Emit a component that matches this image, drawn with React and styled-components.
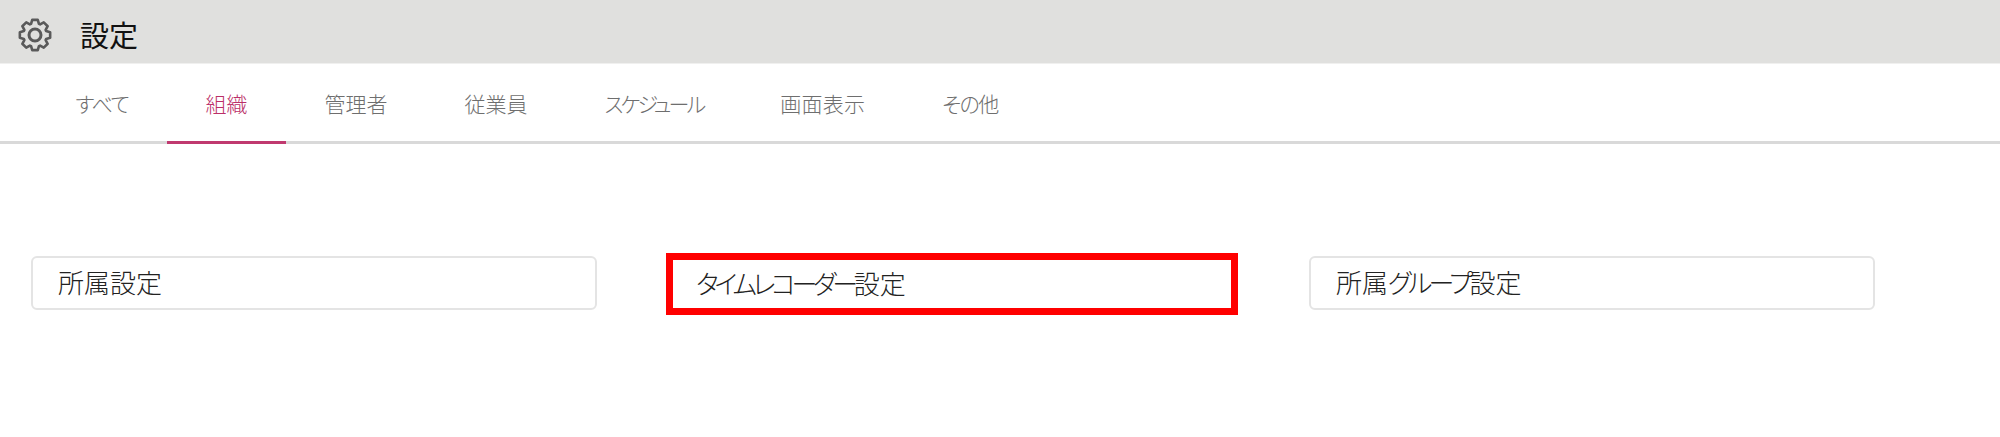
import React from "react"
import styled, { createGlobalStyle } from "styled-components"

const GlobalStyle = createGlobalStyle`
  body {
    margin: 0;
    background: white;
    font-family: "Noto Sans CJK JP", "Noto Sans", sans-serif;
    font-feature-settings: "palt";
  }
`

const Page = styled.div`
  min-height: 437px;
`

const Header = styled.header`
  display: flex;
  align-items: center;
  height: 57px;
  padding: 6px 0 0 18px;
  background-color: #e0e0de;
  border-bottom: 1px solid #f0f0ef;
`

const GearSvg = styled.svg`
  width: 34px;
  height: 34px;
  flex-shrink: 0;
  fill: none;
  stroke: #5a5a5a;
`

const Title = styled.h1`
  margin: 0 0 0 28px;
  font-size: 29px;
  font-weight: 400;
  line-height: 1;
  color: #111111;
`

const TabBar = styled.nav`
  display: flex;
  height: 77px;
  padding-left: 37px;
  border-bottom: 3px solid #d9d9d9;
`

const Tab = styled.div`
  display: flex;
  align-items: center;
  height: 77px;
  padding: 0 38.5px;
  margin-bottom: -3px;
  font-size: 21px;
  font-weight: 300;
  letter-spacing: ${({ $tracking }) => $tracking || 0}px;
  color: ${({ $active }) => ($active ? "#bb2f68" : "#6e6e6e")};
  border-bottom: 3px solid ${({ $active }) => ($active ? "#c0396f" : "transparent")};
`

const Grid = styled.div`
  display: grid;
  grid-template-columns: repeat(3, 566px);
  column-gap: 73px;
  padding: 112px 0 0 31px;
`

const Card = styled.div`
  display: flex;
  align-items: center;
  height: 54px;
  box-sizing: border-box;
  padding: 0 0 3px 25px;
  font-size: 26px;
  font-weight: 300;
  color: #222222;
  background: white;
  border: 2px solid #e4e4e4;
  border-radius: 6px;
`

const HighlightCard = styled(Card)`
  height: 62px;
  margin: -3px -2px -5px -4px;
  padding-left: 23px;
  border: 7px solid #ff0000;
  border-radius: 0;
`

const Kana = styled.span`
  letter-spacing: ${({ $tracking }) => $tracking}px;
`

// 8 rounded teeth around the centre, built from polar points
function gearPath() {
  const points = []
  for (let i = 0; i < 8; i++) {
    const a = (i * Math.PI) / 4
    ;[
      [-0.34, 11.8],
      [-0.18, 15.4],
      [0.18, 15.4],
      [0.34, 11.8],
    ].forEach(([da, r]) => {
      points.push(`${(17 + r * Math.sin(a + da)).toFixed(2)} ${(17 - r * Math.cos(a + da)).toFixed(2)}`)
    })
  }
  return `M${points.join("L")}Z`
}

function Gear() {
  return (
    <GearSvg viewBox="0 0 34 34">
      <path d={gearPath()} strokeWidth="2.6" strokeLinejoin="round" />
      <circle cx="17" cy="17" r="6" strokeWidth="3" />
    </GearSvg>
  )
}

const tabs = [
  { label: "すべて", tracking: -1.5 },
  { label: "組織" },
  { label: "管理者" },
  { label: "従業員" },
  { label: "スケジュール", tracking: -2.8 },
  { label: "画面表示", tracking: 0.2 },
  { label: "その他", tracking: -1.6 },
]

function App() {
  return (
    <Page>
      <GlobalStyle />
      <Header>
        <Gear />
        <Title>設定</Title>
      </Header>
      <TabBar>
        {tabs.map((tab) => (
          <Tab key={tab.label} $active={tab.label === "組織"} $tracking={tab.tracking}>
            {tab.label}
          </Tab>
        ))}
      </TabBar>
      <Grid>
        <Card>所属設定</Card>
        <HighlightCard>
          <Kana $tracking={-4.3}>タイムレコーダー</Kana>設定
        </HighlightCard>
        <Card>
          所属<Kana $tracking={-3.6}>グループ</Kana>設定
        </Card>
      </Grid>
    </Page>
  )
}

export default App
